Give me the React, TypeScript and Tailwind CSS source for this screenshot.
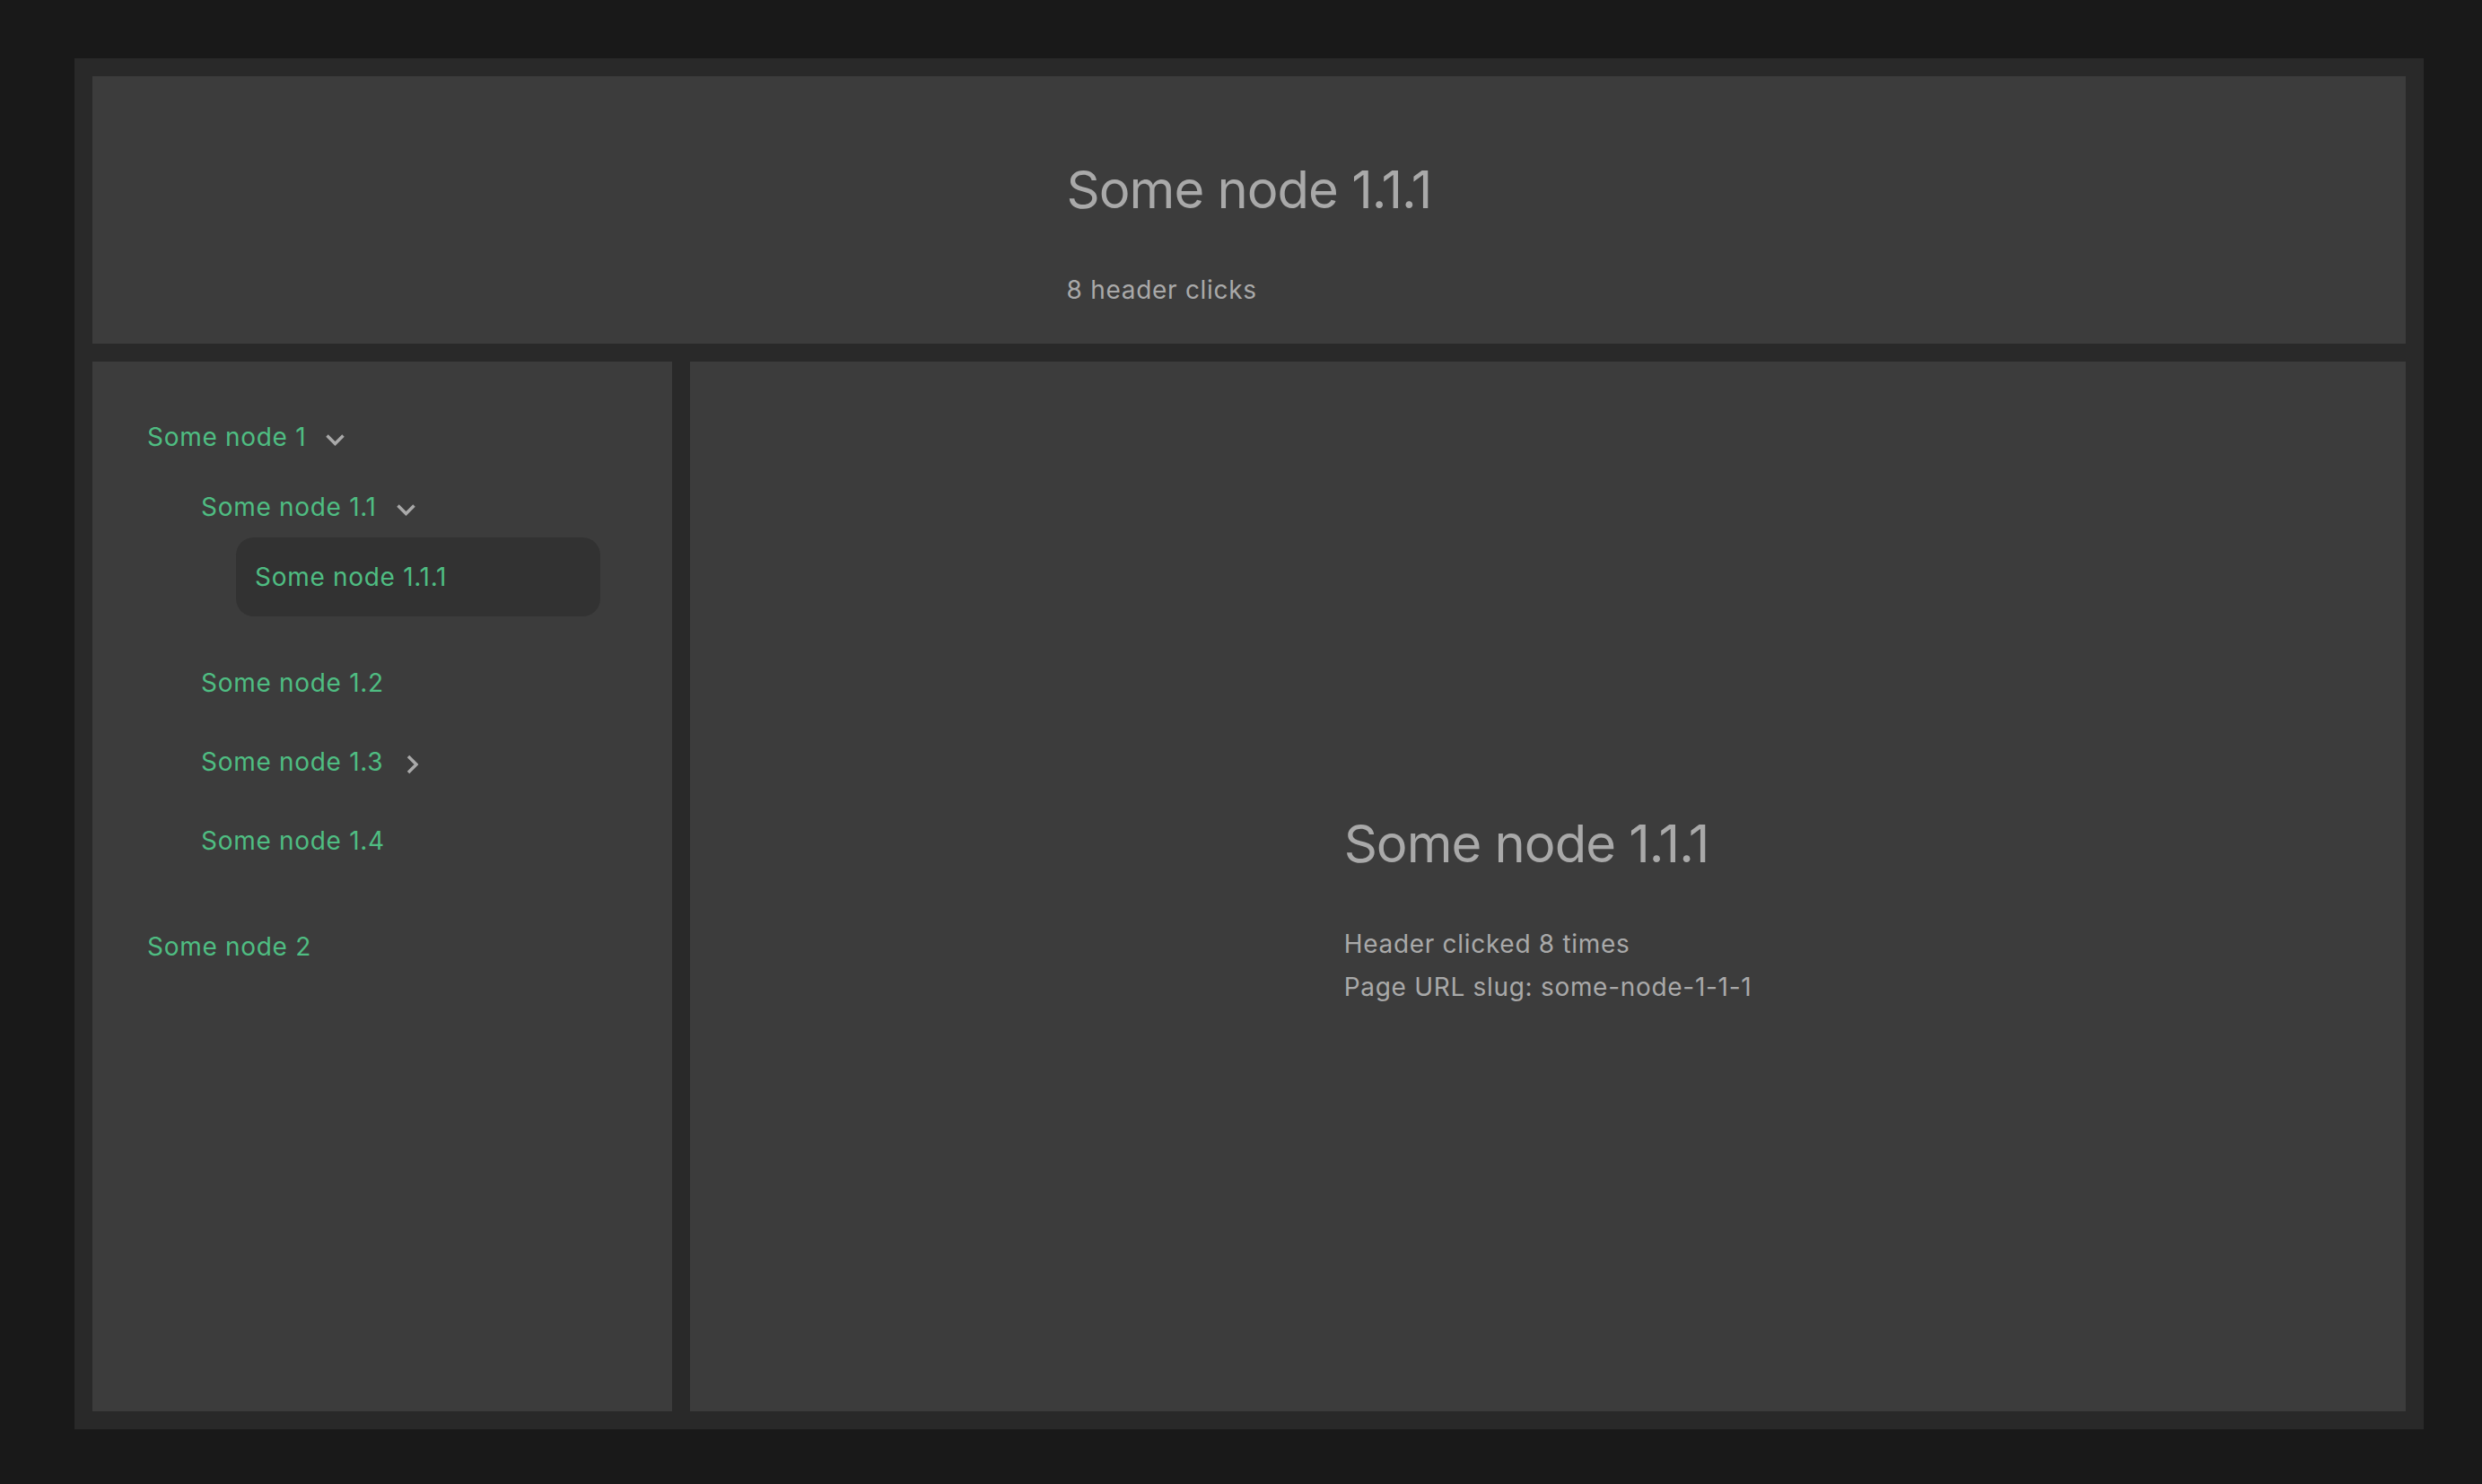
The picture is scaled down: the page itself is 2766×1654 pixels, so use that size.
import { clsx } from 'clsx'

type TreeNode = {
  label: string
  open?: boolean
  active?: boolean
  children?: TreeNode[]
}

const tree: TreeNode[] = [
  {
    label: 'Some node 1',
    open: true,
    children: [
      {
        label: 'Some node 1.1',
        open: true,
        children: [{ label: 'Some node 1.1.1', active: true }],
      },
      { label: 'Some node 1.2' },
      {
        label: 'Some node 1.3',
        children: [{ label: 'Some node 1.3.1' }],
      },
      { label: 'Some node 1.4' },
    ],
  },
  { label: 'Some node 2' },
]

const clicks = 8
const current = 'Some node 1.1.1'

function Chevron({ open }: { open?: boolean }) {
  return (
    <svg
      width="23"
      height="14"
      viewBox="0 0 23 14"
      fill="none"
      className={clsx('ml-[21px] translate-y-[3px] text-[#a9a9a9]', !open && '-rotate-90')}
    >
      <path d="M2.5 2.5 L11.5 11.5 L20.5 2.5" stroke="currentColor" strokeWidth="3.5" />
    </svg>
  )
}

function TreeList({ nodes, nested }: { nodes: TreeNode[]; nested?: boolean }) {
  return (
    <ul className={clsx(nested && '-mt-[10px] mb-[30px] pl-[60px] pr-[20px]')}>
      {nodes.map((node) => (
        <li key={node.label}>
          <div
            className={clsx(
              'flex h-[88px] items-center rounded-[20px] px-[21px] text-[#4fbd82]',
              node.active && 'bg-[#323232]',
            )}
          >
            <span>{node.label}</span>
            {node.children ? <Chevron open={node.open} /> : null}
          </div>
          {node.children && node.open ? <TreeList nodes={node.children} nested /> : null}
        </li>
      ))}
    </ul>
  )
}

export default function App() {
  return (
    <div className="flex h-[1654px] flex-col bg-[#191919] pt-[65px] pr-[65px] pb-[61px] pl-[83px] font-['Inter','Liberation_Sans',sans-serif] text-[28px] leading-[48px] tracking-[0.7px] text-[#a9a9a9]">
      <div className="flex flex-1 flex-col gap-[20px] bg-[#292929] p-[20px]">
        <header className="flex justify-center bg-[#3c3c3c] pt-[91px] pb-[36px]">
          <div>
            <h1 className="text-[58px] leading-[70px] tracking-[-1px]">{current}</h1>
            <p className="mt-[53px]">{clicks} header clicks</p>
          </div>
        </header>

        <div className="flex min-h-0 flex-1 gap-[20px]">
          <aside className="w-[646px] shrink-0 bg-[#3c3c3c] px-[40px] pt-[40px]">
            <nav>
              <TreeList nodes={tree} />
            </nav>
          </aside>

          <main className="flex flex-1 items-center justify-center bg-[#3c3c3c]">
            <div className="pt-[53px]">
              <h2 className="text-[58px] leading-[70px] tracking-[-1px]">{current}</h2>
              <div className="mt-[53px]">
                <p>Header clicked {clicks} times</p>
                <p>Page URL slug: some-node-1-1-1</p>
              </div>
            </div>
          </main>
        </div>
      </div>
    </div>
  )
}
